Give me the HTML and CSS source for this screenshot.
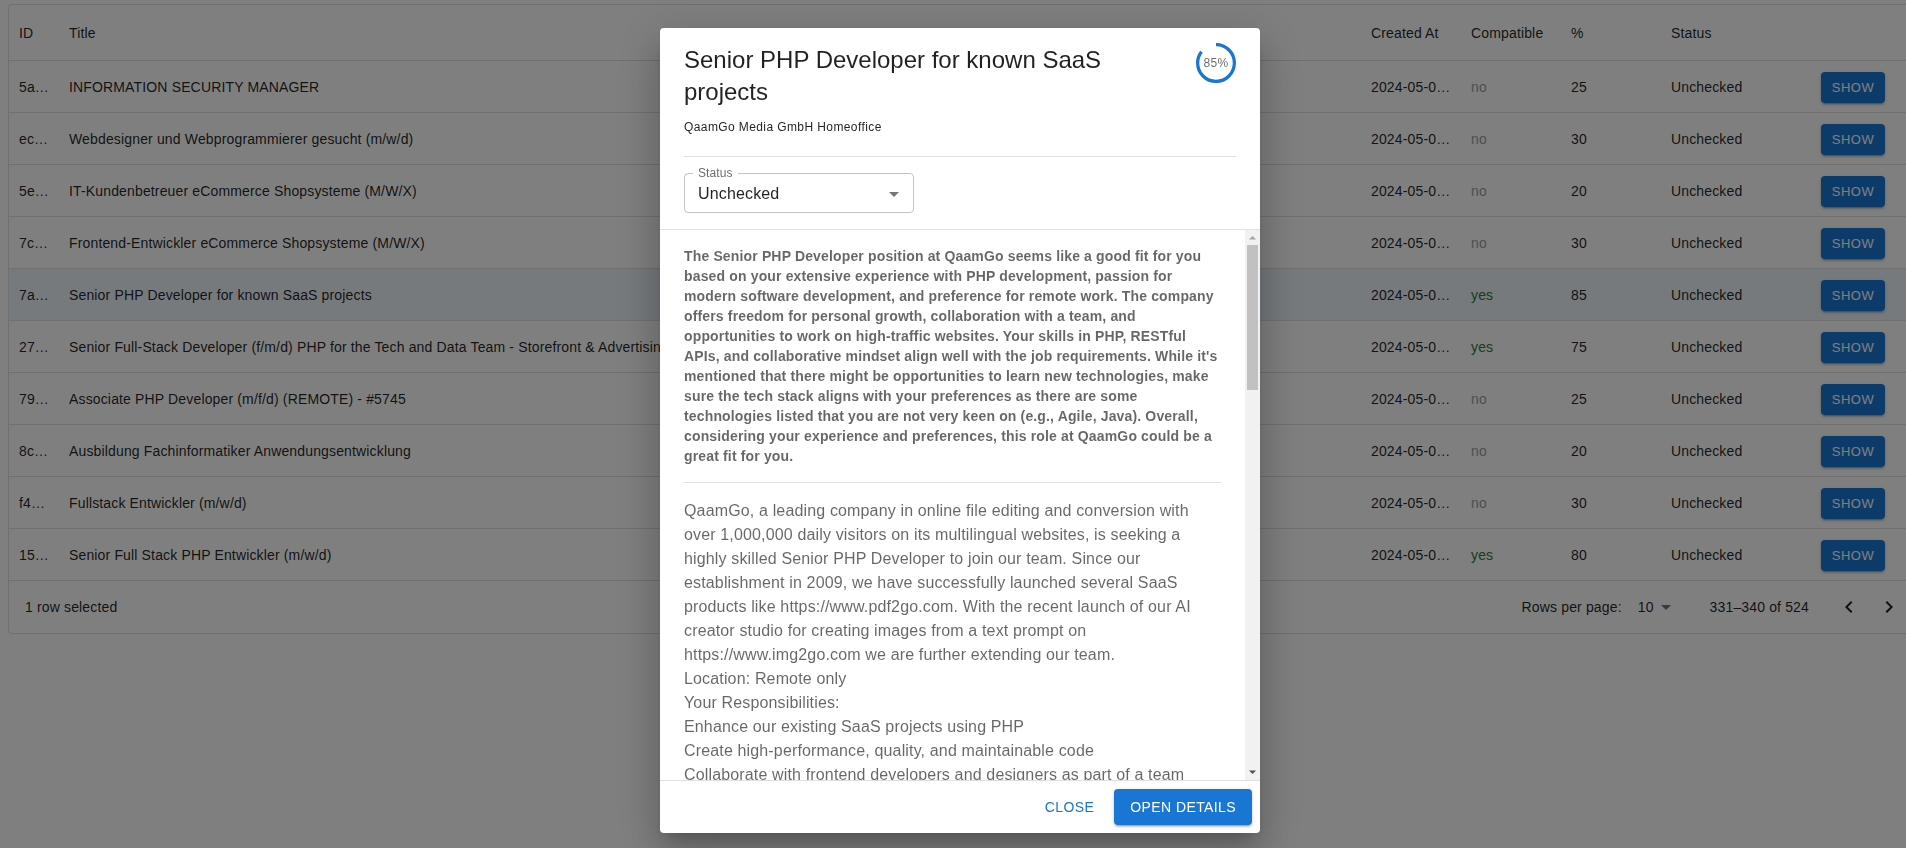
FILE: index.html
```html
<!DOCTYPE html>
<html lang="en">
<head>
<meta charset="utf-8">
<title>Jobs</title>
<link rel="stylesheet" href="styles.css">
</head>
<body>
<div class="grid">
  <div class="row head">
    <div class="cell">ID</div>
    <div class="cell">Title</div>
    <div class="cell">Created At</div>
    <div class="cell">Compatible</div>
    <div class="cell">%</div>
    <div class="cell">Status</div>
    <div class="cell"></div>
  </div>
  <div class="row"><div class="cell">5a…</div><div class="cell">INFORMATION SECURITY MANAGER</div><div class="cell">2024-05-0…</div><div class="cell no">no</div><div class="cell">25</div><div class="cell">Unchecked</div><div class="cell"><span class="show">Show</span></div></div>
  <div class="row"><div class="cell">ec…</div><div class="cell">Webdesigner und Webprogrammierer gesucht (m/w/d)</div><div class="cell">2024-05-0…</div><div class="cell no">no</div><div class="cell">30</div><div class="cell">Unchecked</div><div class="cell"><span class="show">Show</span></div></div>
  <div class="row"><div class="cell">5e…</div><div class="cell">IT-Kundenbetreuer eCommerce Shopsysteme (M/W/X)</div><div class="cell">2024-05-0…</div><div class="cell no">no</div><div class="cell">20</div><div class="cell">Unchecked</div><div class="cell"><span class="show">Show</span></div></div>
  <div class="row"><div class="cell">7c…</div><div class="cell">Frontend-Entwickler eCommerce Shopsysteme (M/W/X)</div><div class="cell">2024-05-0…</div><div class="cell no">no</div><div class="cell">30</div><div class="cell">Unchecked</div><div class="cell"><span class="show">Show</span></div></div>
  <div class="row selected"><div class="cell">7a…</div><div class="cell">Senior PHP Developer for known SaaS projects</div><div class="cell">2024-05-0…</div><div class="cell yes">yes</div><div class="cell">85</div><div class="cell">Unchecked</div><div class="cell"><span class="show">Show</span></div></div>
  <div class="row"><div class="cell">27…</div><div class="cell">Senior Full-Stack Developer (f/m/d) PHP for the Tech and Data Team - Storefront &amp; Advertising Technology</div><div class="cell">2024-05-0…</div><div class="cell yes">yes</div><div class="cell">75</div><div class="cell">Unchecked</div><div class="cell"><span class="show">Show</span></div></div>
  <div class="row"><div class="cell">79…</div><div class="cell">Associate PHP Developer (m/f/d) (REMOTE) - #5745</div><div class="cell">2024-05-0…</div><div class="cell no">no</div><div class="cell">25</div><div class="cell">Unchecked</div><div class="cell"><span class="show">Show</span></div></div>
  <div class="row"><div class="cell">8c…</div><div class="cell">Ausbildung Fachinformatiker Anwendungsentwicklung</div><div class="cell">2024-05-0…</div><div class="cell no">no</div><div class="cell">20</div><div class="cell">Unchecked</div><div class="cell"><span class="show">Show</span></div></div>
  <div class="row"><div class="cell">f4…</div><div class="cell">Fullstack Entwickler (m/w/d)</div><div class="cell">2024-05-0…</div><div class="cell no">no</div><div class="cell">30</div><div class="cell">Unchecked</div><div class="cell"><span class="show">Show</span></div></div>
  <div class="row"><div class="cell">15…</div><div class="cell">Senior Full Stack PHP Entwickler (m/w/d)</div><div class="cell">2024-05-0…</div><div class="cell yes">yes</div><div class="cell">80</div><div class="cell">Unchecked</div><div class="cell"><span class="show">Show</span></div></div>
  <div class="footer">
    <div class="selected-count">1 row selected</div>
    <div class="pagination">
      <span class="pg-label">Rows per page:</span>
      <span class="pg-select">10<svg class="pg-arrow" viewBox="0 0 24 24"><path d="M7 10l5 5 5-5z"/></svg></span>
      <span class="pg-rows">331–340 of 524</span>
      <span class="pg-actions">
        <span class="pg-btn"><svg viewBox="0 0 24 24"><path d="M15.41 7.41 14 6l-6 6 6 6 1.41-1.41L10.83 12z"/></svg></span>
        <span class="pg-btn"><svg viewBox="0 0 24 24"><path d="M10 6 8.59 7.41 13.17 12l-4.58 4.59L10 18l6-6z"/></svg></span>
      </span>
    </div>
  </div>
</div>

<div class="backdrop">
  <div class="dialog">
    <div class="dialog-head">
      <div class="title-row">
        <h2 class="title">Senior PHP Developer for known SaaS projects</h2>
        <div class="progress">
          <svg class="progress-svg" viewBox="22 22 44 44"><circle cx="44" cy="44" r="20.2" fill="none" stroke-width="3.6" stroke-dasharray="126.92" stroke-dashoffset="19.04"/></svg>
          <span class="progress-label">85%</span>
        </div>
      </div>
      <div class="company">QaamGo Media GmbH Homeoffice</div>
      <hr class="divider head-divider">
      <div class="select">
        <span class="select-label">Status</span>
        <span class="select-value">Unchecked</span>
        <svg class="select-arrow" viewBox="0 0 24 24"><path d="M7 10l5 5 5-5z"/></svg>
      </div>
    </div>
    <div class="dialog-content">
      <div class="scroll-body">
        <p class="summary">The Senior PHP Developer position at QaamGo seems like a good fit for you based on your extensive experience with PHP development, passion for modern software development, and preference for remote work. The company offers freedom for personal growth, collaboration with a team, and opportunities to work on high-traffic websites. Your skills in PHP, RESTful APIs, and collaborative mindset align well with the job requirements. While it's mentioned that there might be opportunities to learn new technologies, make sure the tech stack aligns with your preferences as there are some technologies listed that you are not very keen on (e.g., Agile, Java). Overall, considering your experience and preferences, this role at QaamGo could be a great fit for you.</p>
        <hr class="divider body-divider">
        <p class="description">QaamGo, a leading company in online file editing and conversion with over 1,000,000 daily visitors on its multilingual websites, is seeking a highly skilled Senior PHP Developer to join our team. Since our establishment in 2009, we have successfully launched several SaaS products like https://www.pdf2go.com. With the recent launch of our AI creator studio for creating images from a text prompt on https://www.img2go.com we are further extending our team.<br>Location: Remote only<br>Your Responsibilities:<br>Enhance our existing SaaS projects using PHP<br>Create high-performance, quality, and maintainable code<br>Collaborate with frontend developers and designers as part of a team<br>Develop and maintain RESTful APIs<br>Take part in code reviews and share your knowledge</p>
      </div>
      <div class="vscroll">
        <div class="vs-btn"><svg viewBox="0 0 15 15"><polygon class="vs-up" points="4,9.5 7.5,6 11,9.5"/></svg></div>
        <div class="vs-track"><div class="vs-thumb"></div></div>
        <div class="vs-btn"><svg viewBox="0 0 15 15"><polygon class="vs-down" points="4,5.5 7.5,9 11,5.5"/></svg></div>
      </div>
    </div>
    <div class="dialog-actions">
      <span class="btn-text">Close</span>
      <span class="btn-contained">Open Details</span>
    </div>
  </div>
</div>
</body>
</html>
```

FILE: styles.css
```css
* { box-sizing: border-box; }
html, body {
  margin: 0;
  padding: 0;
  width: 1906px;
  height: 848px;
  overflow: hidden;
  background: #fff;
  font-family: "Liberation Sans", Arial, Helvetica, sans-serif;
  color: rgba(0,0,0,0.87);
}

/* ---------- data grid ---------- */
.grid {
  margin: 4px 0 0 8px;
  width: 1904px;
  border: 1px solid #e0e0e0;
  border-radius: 4px;
  font-size: 14px;
  letter-spacing: 0.01071em;
}
.row {
  display: grid;
  grid-template-columns: 50px 1302px 100px 100px 100px 150px 1fr;
  height: 52px;
  border-bottom: 1px solid #e0e0e0;
}
.row.head {
  height: 56px;
  font-weight: 400;
}
.row.selected { background: rgba(25,118,210,0.08); }
.cell {
  display: flex;
  align-items: center;
  padding: 0 10px;
  overflow: hidden;
  white-space: nowrap;
  min-width: 0;
}
.cell.no { color: #9e9e9e; }
.cell.yes { color: #2e7d32; }
.show {
  display: inline-flex;
  align-items: center;
  justify-content: center;
  min-width: 64px;
  height: 30.75px;
  margin-top: 2px;
  padding: 4px 10px;
  border-radius: 4px;
  background: #1976d2;
  color: #fff;
  font-size: 13px;
  font-weight: 400;
  letter-spacing: 0.46px;
  text-transform: uppercase;
  box-shadow: 0 3px 1px -2px rgba(0,0,0,0.2), 0 2px 2px 0 rgba(0,0,0,0.14), 0 1px 5px 0 rgba(0,0,0,0.12);
}
.footer {
  display: flex;
  align-items: center;
  justify-content: space-between;
  height: 52px;
}
.selected-count { margin-left: 16px; }
.pagination {
  display: flex;
  align-items: center;
  padding-right: 2px;
}
.pg-select {
  display: flex;
  align-items: center;
  margin: 0 32px 0 8px;
  padding: 0 24px 0 8px;
}
.pg-arrow {
  width: 24px;
  height: 24px;
  fill: rgba(0,0,0,0.54);
  margin-right: -24px;
}
.pg-actions {
  display: flex;
  margin-left: 20px;
}
.pg-btn {
  width: 40px;
  height: 40px;
  display: flex;
  align-items: center;
  justify-content: center;
}
.pg-btn svg { width: 24px; height: 24px; fill: rgba(0,0,0,0.87); }

/* ---------- dialog ---------- */
.backdrop {
  position: fixed;
  inset: 0;
  background: rgba(0,0,0,0.5);
  display: flex;
  align-items: flex-start;
  padding: 28px 0 0 660px;
}
.dialog {
  width: 600px;
  height: 805px;
  background: #fff;
  border-radius: 4px;
  display: flex;
  flex-direction: column;
  overflow: hidden;
  box-shadow: 0 11px 15px -7px rgba(0,0,0,0.2), 0 24px 38px 3px rgba(0,0,0,0.14), 0 9px 46px 8px rgba(0,0,0,0.12);
}
.dialog-head { padding: 16px 24px 16px; }
.title-row {
  display: flex;
  align-items: flex-start;
  gap: 16px;
}
.title {
  flex: 1;
  margin: 0;
  font-size: 24px;
  font-weight: 400;
  line-height: 32px;
  color: rgba(0,0,0,0.87);
}
.progress {
  position: relative;
  width: 40px;
  height: 40px;
  margin-top: -1px;
  display: flex;
  align-items: center;
  justify-content: center;
}
.progress-svg {
  position: absolute;
  inset: 0;
  width: 40px;
  height: 40px;
  transform: rotate(-90deg);
  stroke: #1976d2;
}
.progress-label {
  font-size: 12px;
  letter-spacing: 0.03333em;
  color: rgba(0,0,0,0.6);
  line-height: 1;
}
.company {
  margin-top: 9px;
  font-size: 12px;
  line-height: 20px;
  letter-spacing: 0.03333em;
  color: rgba(0,0,0,0.87);
}
.divider {
  border: 0;
  height: 1px;
  background: rgba(0,0,0,0.12);
  margin: 0;
}
.head-divider { margin-top: 19px; }
.select {
  position: relative;
  margin-top: 16px;
  width: 230px;
  height: 40px;
  border: 1px solid rgba(0,0,0,0.23);
  border-radius: 4px;
  display: flex;
  align-items: center;
  padding: 1px 7px 0 13px;
}
.select-label {
  position: absolute;
  top: -7px;
  left: 8px;
  padding: 0 5px;
  background: #fff;
  font-size: 12px;
  line-height: 12px;
  letter-spacing: 0.00938em;
  color: rgba(0,0,0,0.6);
}
.select-value {
  flex: 1;
  font-size: 16px;
  letter-spacing: 0.00938em;
  color: rgba(0,0,0,0.87);
}
.select-arrow { width: 24px; height: 24px; fill: rgba(0,0,0,0.54); }

.dialog-content {
  flex: 1;
  min-height: 0;
  display: flex;
  border-top: 1px solid rgba(0,0,0,0.12);
  border-bottom: 1px solid rgba(0,0,0,0.12);
}
.scroll-body {
  flex: 1;
  min-width: 0;
  overflow: hidden;
  padding: 16px 24px 0 24px;
}
.summary {
  margin: 0;
  font-size: 14px;
  font-weight: 700;
  line-height: 20px;
  letter-spacing: 0.01071em;
  color: rgba(0,0,0,0.6);
}
.body-divider { margin: 16px 0; }
.description {
  margin: 0;
  font-size: 16px;
  line-height: 24px;
  letter-spacing: 0.00938em;
  color: rgba(0,0,0,0.6);
}
.vscroll {
  width: 15px;
  flex: none;
  background: #f1f1f1;
  display: flex;
  flex-direction: column;
}
.vs-btn { height: 15px; flex: none; }
.vs-btn svg { width: 15px; height: 15px; display: block; }
.vs-up { fill: #a3a3a3; }
.vs-down { fill: #505050; }
.vs-track { flex: 1; }
.vs-thumb {
  margin: 0 2px;
  height: 145px;
  background: #c1c1c1;
}
.dialog-actions {
  height: 52px;
  flex: none;
  display: flex;
  align-items: center;
  justify-content: flex-end;
  padding: 8px;
}
.btn-text {
  display: inline-flex;
  align-items: center;
  justify-content: center;
  min-width: 64px;
  height: 36.5px;
  padding: 6px 8px;
  font-size: 14px;
  font-weight: 400;
  letter-spacing: 0.02857em;
  text-transform: uppercase;
  color: #1976d2;
}
.btn-contained {
  display: inline-flex;
  align-items: center;
  justify-content: center;
  margin-left: 12px;
  height: 36.5px;
  padding: 6px 16px;
  border-radius: 4px;
  background: #1976d2;
  color: #fff;
  font-size: 14px;
  font-weight: 400;
  letter-spacing: 0.02857em;
  text-transform: uppercase;
  box-shadow: 0 3px 1px -2px rgba(0,0,0,0.2), 0 2px 2px 0 rgba(0,0,0,0.14), 0 1px 5px 0 rgba(0,0,0,0.12);
}
```
